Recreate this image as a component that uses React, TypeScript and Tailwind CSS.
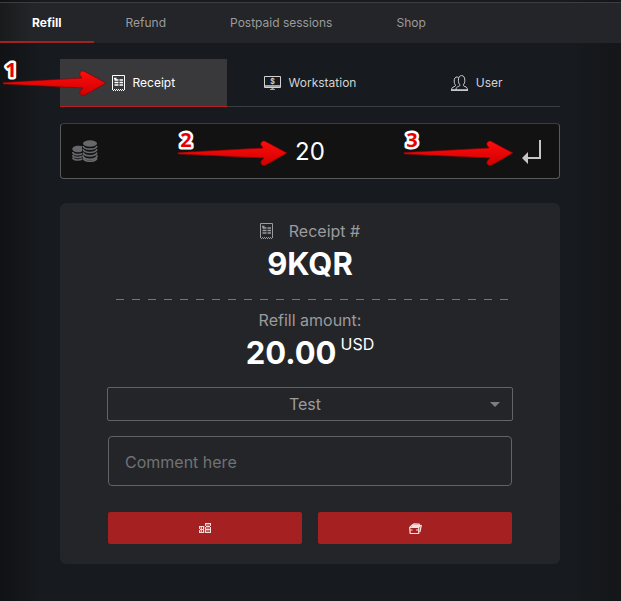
import React from "react"

interface IconProps {
  className?: string
}

const ReceiptIcon: React.FC<IconProps> = ({ className }) => (
  <svg viewBox="0 0 13 16" fill="none" stroke="currentColor" className={className} aria-hidden="true">
    <path d="M.5 15V.5h12V15" />
    <path d="M1 15.500h1M3 15.500h1M5 15.500h1M7 15.500h1M9 15.500h1M11 15.500h1M2 14.500h1M4 14.500h1M6 14.500h1M8 14.500h1M10 14.500h1" />
    <path d="M2 3.500h2.500M2.500 5h4M7.500 5h3.500M2.500 7.500h4M7.500 7.500h3.500M2.500 10h4M7.500 10h3.500" strokeWidth="1.400" />
  </svg>
)

const WorkstationIcon: React.FC<IconProps> = ({ className }) => (
  <svg viewBox="0 0 17 14" fill="none" className={className} aria-hidden="true">
    <path d="M.5.5h16v11H.5z" stroke="currentColor" />
    <path d="M1 9h15v3H1zM6 13h5v1H6zM7.500 12h2v1h-2z" fill="currentColor" opacity=".75" />
    <text x="8.500" y="7.500" fontSize="7" fontWeight="700" textAnchor="middle" fill="currentColor">
      $
    </text>
  </svg>
)

const UserIcon: React.FC<IconProps> = ({ className }) => (
  <svg viewBox="0 0 17 16" fill="none" stroke="currentColor" className={className} aria-hidden="true">
    <path d="M5 15h11.500c0-2.200-1-2.900-2.500-3.500-1.500-.5-1.800-.8-1.600-1.800 1-1 1.400-2.400 1.400-4.400C13.800 2 12.500.6 10.600.6S7.400 2 7.400 5.300c0 2 .5 3.400 1.400 4.400.2 1 0 1.300-1.500 1.800C5.800 12.100 5 12.800 5 15z" />
    <path d="M7.500 2.500C7 2.100 6.500 2 6 2 4.200 2 3.200 3.300 3.200 6c0 1.900.4 3 1.200 4 .2 1 0 1.200-1.400 1.700C1.400 12.300.6 12.900.6 15H5" />
    <path d="M0 15.200h17" strokeWidth="1.400" />
  </svg>
)

const CoinsIcon: React.FC<IconProps> = ({ className }) => (
  <svg viewBox="0 0 26 22" fill="none" className={className} aria-hidden="true">
    <ellipse cx="18" cy="3.500" rx="7" ry="3.300" fill="currentColor" />
    <path d="M10 8.800V6.300C9 6 7.300 5.800 6 5.800c-3.200 0-5.700 1.500-5.700 3.200S2.800 12.200 6 12.200c1.500 0 3-.4 4-1z" fill="currentColor" />
    <path
      d="M11 6c.8 2 3.700 3.200 7 3.200S24.200 8 25 6M11 9.300c.8 2 3.700 3.200 7 3.200s6.200-1.200 7-3.200M11 12.600c.8 2 3.700 3.200 7 3.200s6.200-1.200 7-3.200M11 15.300v.8c.8 2 3.700 3.200 7 3.200s6.200-1.200 7-3.200v-.8M11 18.300c.8 2 3.700 3 7 3s6.200-1 7-3M.5 12c.6 1.600 2.900 2.700 5.500 2.700 1.600 0 3-.3 4-.9M.5 15c.6 1.600 2.900 2.500 5.500 2.500 1.600 0 3-.3 4-.9M.5 17.600c.6 1.600 2.900 2.400 5.500 2.400 1.600 0 3-.3 4-.9"
      stroke="currentColor"
      strokeWidth="1.700"
    />
  </svg>
)

const EnterIcon: React.FC<IconProps> = ({ className }) => (
  <svg viewBox="0 0 19 24" className={className} aria-hidden="true">
    <path d="M17 0h2v19H6v5L0 18l6-6v5h11z" fill="currentColor" />
  </svg>
)

const CashIcon: React.FC<IconProps> = ({ className }) => (
  <svg viewBox="0 0 12 10" fill="none" stroke="currentColor" className={className} aria-hidden="true">
    <path d="M0 3.500h5M1 6.500h4M0 9.500h5M6 .5h6M7 3.500h4M6 6.500h6M7 9.500h5" strokeWidth="1.200" />
    <path d="M.7 3v3M.7 7v3M4.600 3v3M4.600 7v3M2 5h1M2 8h1M6.700 0v3M6.700 4v3M6.700 7v3M11.400 0v3M11.400 4v3M11.400 7v3M8.500 2h1M8.500 5h1M8.500 8h1" strokeWidth="1.300" />
  </svg>
)

const CardsIcon: React.FC<IconProps> = ({ className }) => (
  <svg viewBox="0 0 13 11" fill="none" stroke="currentColor" className={className} aria-hidden="true">
    <path d="M.7 4.500h9v6H1.200zM1 7h2.500M7 7h2.500" strokeWidth="1.200" />
    <path d="M1 4.200l1.500-1.500h9.700l-1.400 6.500M2.700 2.500L5 .8l5 .4 1 1.300M3 3.700h8" strokeWidth="1.300" />
  </svg>
)

interface PointerProps {
  step: number
  tail?: number
  className: string
}

const Pointer: React.FC<PointerProps> = ({ step, tail = 0, className }) => (
  <svg viewBox="0 0 110 44" className={`pointer-events-none absolute h-[44px] w-[110px] overflow-visible ${className}`} aria-hidden="true">
    <defs>
      <linearGradient id={`pointer-${step}`} x1="0" y1="0" x2="0" y2="1">
        <stop offset="0" stopColor="#ff0d0d" />
        <stop offset="1" stopColor="#cf0000" />
      </linearGradient>
    </defs>
    <path
      d={`M${tail} 24.500L85 20l-1-1.500c-2.500-2-1-6 2.500-5.500l1.500.7L109 25 88 37c-4 2-7-2.500-4-5l2-2L${tail} 26z`}
      fill={`url(#pointer-${step})`}
      stroke="#7c0000"
      strokeWidth=".6"
    />
    <text
      x={tail + 8}
      y="19"
      fontSize="20"
      fontWeight="700"
      textAnchor="middle"
      fill="#e80000"
      stroke="#fff"
      strokeWidth="5"
      strokeLinejoin="round"
      paintOrder="stroke"
      fontFamily="'Open Sans', sans-serif"
    >
      {step}
    </text>
  </svg>
)

const sections = ["Refill", "Refund", "Postpaid sessions", "Shop"]

const App: React.FC = () => {
  const [section, setSection] = React.useState("Refill")
  const [target, setTarget] = React.useState("Receipt")
  const [amount, setAmount] = React.useState("20")

  const targets = [
    { name: "Receipt", icon: <ReceiptIcon className="h-4 w-[13px]" /> },
    { name: "Workstation", icon: <WorkstationIcon className="h-[14px] w-[17px]" /> },
    { name: "User", icon: <UserIcon className="h-4 w-[17px]" /> },
  ]

  return (
    <div className="min-h-screen bg-[#171a1e] bg-[linear-gradient(to_right,#101214,#171a1e_40px,#171a1e_calc(100%-50px),#141618)] pt-[2px] font-['Inter',sans-serif] text-xs text-[#9b9b9d]">
      <nav className="flex h-[41px] border-t border-[#3c3d40] bg-[#242528] bg-[linear-gradient(to_right,#191a1c,#242528_32px)]">
        {sections.map((name) => (
          <button
            key={name}
            onClick={() => setSection(name)}
            className={`border-b-2 px-8 pt-[2px] ${section === name ? "border-[#a42021] font-bold text-white" : "border-transparent"}`}
          >
            {name}
          </button>
        ))}
      </nav>

      <main className="pt-4 pr-[61px] pb-9 pl-[60px]">
        <div className="relative grid h-12 grid-cols-3 border-b border-[#3c3d40]">
          {targets.map((t) => (
            <button
              key={t.name}
              onClick={() => setTarget(t.name)}
              className={`-mb-px flex items-center justify-center gap-2 border-b ${
                target === t.name ? "border-[#b32022] bg-[#39393c] text-white" : "border-transparent text-[#d2d2d3]"
              }`}
            >
              {t.icon}
              {t.name}
            </button>
          ))}
          <Pointer step={1} tail={6} className="-top-px -left-[63px]" />
        </div>

        <div className="relative mt-4 flex h-14 items-center rounded-sm border border-[#58595b] border-t-[#3a3b3d] bg-[#121212] px-[11px]">
          <CoinsIcon className="h-[22px] w-[26px] text-[#67686b]" />
          <input
            aria-label="Amount"
            value={amount}
            onChange={(e) => setAmount(e.target.value)}
            className="min-w-0 flex-1 bg-transparent pt-[2px] text-center text-2xl text-white outline-none"
          />
          <button aria-label="Submit amount" className="flex w-[26px] justify-start pt-[2px] text-[#c6c6c7]">
            <EnterIcon className="h-6 w-[19px]" />
          </button>
          <Pointer step={2} className="top-1 left-[117px]" />
          <Pointer step={3} className="top-1 left-[343px]" />
        </div>

        <section className="mt-6 rounded-md bg-[#242528] px-12 pt-4 pb-5">
          <div className="flex h-6 items-center justify-center gap-4 text-base">
            <ReceiptIcon className="h-4 w-[13px]" />
            Receipt #
          </div>
          <div className="text-center text-[31px] leading-[42px] font-bold text-white">9KQR</div>
          <div className="mt-[14px] mr-1 ml-2 h-px bg-[repeating-linear-gradient(to_right,#737477_0_8px,transparent_8px_16px)]" />
          <div className="mt-2 text-center text-base">Refill amount:</div>
          <div className="flex h-[42px] justify-center gap-1 text-white">
            <span className="text-[31px] leading-[42px] font-bold">20.00</span>
            <span className="text-base">USD</span>
          </div>

          <div className="relative -mx-px mt-[13px]">
            <select
              aria-label="Payment account"
              className="block h-[34px] w-full appearance-none rounded-xs border border-[#626366] bg-[#242528] pr-[26px] pl-4 text-center text-base outline-none"
            >
              <option>Test</option>
            </select>
            <svg viewBox="0 0 10 5" className="pointer-events-none absolute top-[15px] right-[13px] h-[5px] w-[10px] text-[#7d7e80]" aria-hidden="true">
              <path d="M0 0h10L5 5z" fill="currentColor" />
            </svg>
          </div>
          <input
            aria-label="Comment"
            placeholder="Comment here"
            className="mt-[15px] block h-[50px] w-full rounded-sm border border-[#626366] bg-transparent px-4 pt-[2px] text-base outline-none placeholder:text-[#717275]"
          />
          <div className="mt-[26px] grid grid-cols-2 gap-4 text-[#f4dede]">
            <button aria-label="Pay with cash" className="flex h-8 items-center justify-center rounded-xs bg-[#a42021]">
              <CashIcon className="h-[10px] w-3" />
            </button>
            <button aria-label="Pay with card" className="flex h-8 items-center justify-center rounded-xs bg-[#a42021]">
              <CardsIcon className="h-[11px] w-[13px]" />
            </button>
          </div>
        </section>
      </main>
    </div>
  )
}

export default App
